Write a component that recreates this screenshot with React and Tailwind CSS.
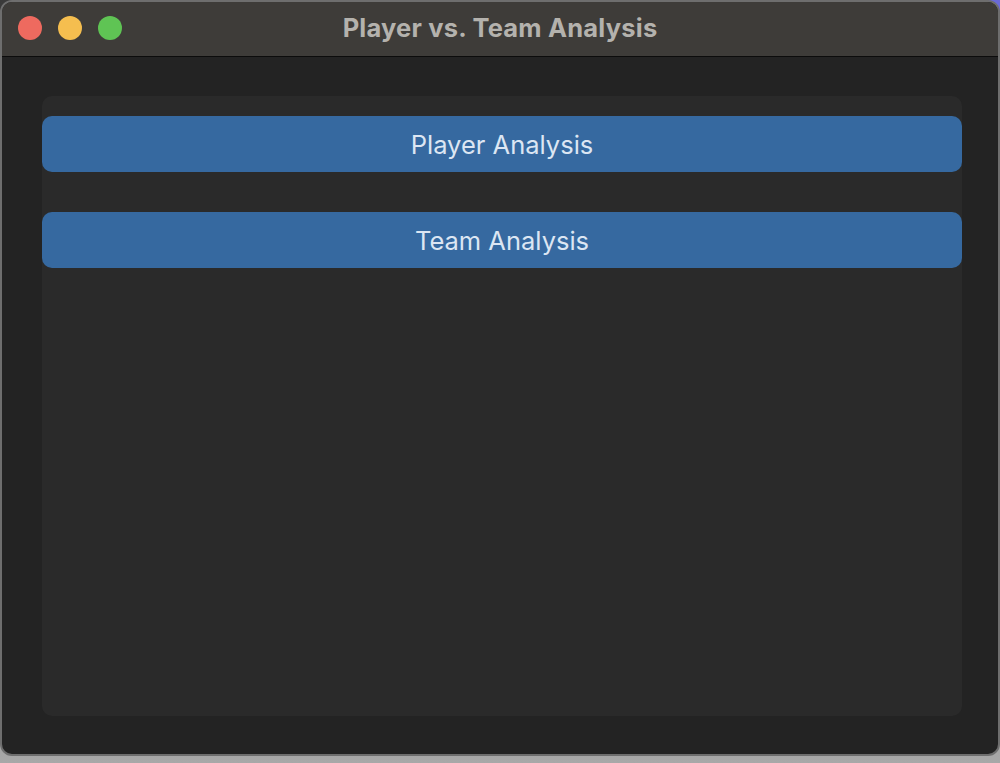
export default function App() {
  return (
    <div className="w-[1000px] h-[763px] bg-gradient-to-b from-[#3a3a3a] via-[#5a5a5a] to-[#a8a8a8] relative overflow-hidden" style={{ fontFamily: '"Open Sans", "Noto Sans", "Liberation Sans", sans-serif' }}>
      <div className="absolute right-0 top-0 w-[30px] h-[30px] bg-[#6a6ad8]" />
      <div className="relative w-[1000px] h-[756px] rounded-[12px] border-2 border-[#6e6e6e] bg-[#232323] overflow-hidden flex flex-col">
        <div className="h-[55px] shrink-0 bg-[#3e3c39] border-b border-[#0c0c0c] relative flex items-center justify-center">
          <div className="absolute left-[16px] top-[14px] flex gap-[16px]">
            <div className="w-[24px] h-[24px] rounded-full bg-[#ee6a5f]" />
            <div className="w-[24px] h-[24px] rounded-full bg-[#f5be4f]" />
            <div className="w-[24px] h-[24px] rounded-full bg-[#5fc454]" />
          </div>
          <span className="text-[25.5px] font-bold text-[#b4b2ad] tracking-[0.2px] leading-none mt-[-3px]" style={{ fontFamily: 'Inter, "Liberation Sans", sans-serif' }}>Player vs. Team Analysis</span>
        </div>
        <div className="flex-1 pt-[39px] pb-[38px] pl-[40px] pr-[36px] flex">
          <div className="flex-1 bg-[#2a2a2a] rounded-[10px] pt-[20px] flex flex-col gap-[40px]">
            <button className="h-[56px] w-full rounded-[10px] bg-[#3669a0] text-[#dce6f3] text-[25.5px] flex items-center justify-center pt-[2px]" style={{ fontFamily: 'Inter, "Liberation Sans", sans-serif' }}>Player Analysis</button>
            <button className="h-[56px] w-full rounded-[10px] bg-[#3669a0] text-[#dce6f3] text-[25.5px] flex items-center justify-center pt-[2px]" style={{ fontFamily: 'Inter, "Liberation Sans", sans-serif' }}>Team Analysis</button>
          </div>
        </div>
      </div>
    </div>
  );
}
